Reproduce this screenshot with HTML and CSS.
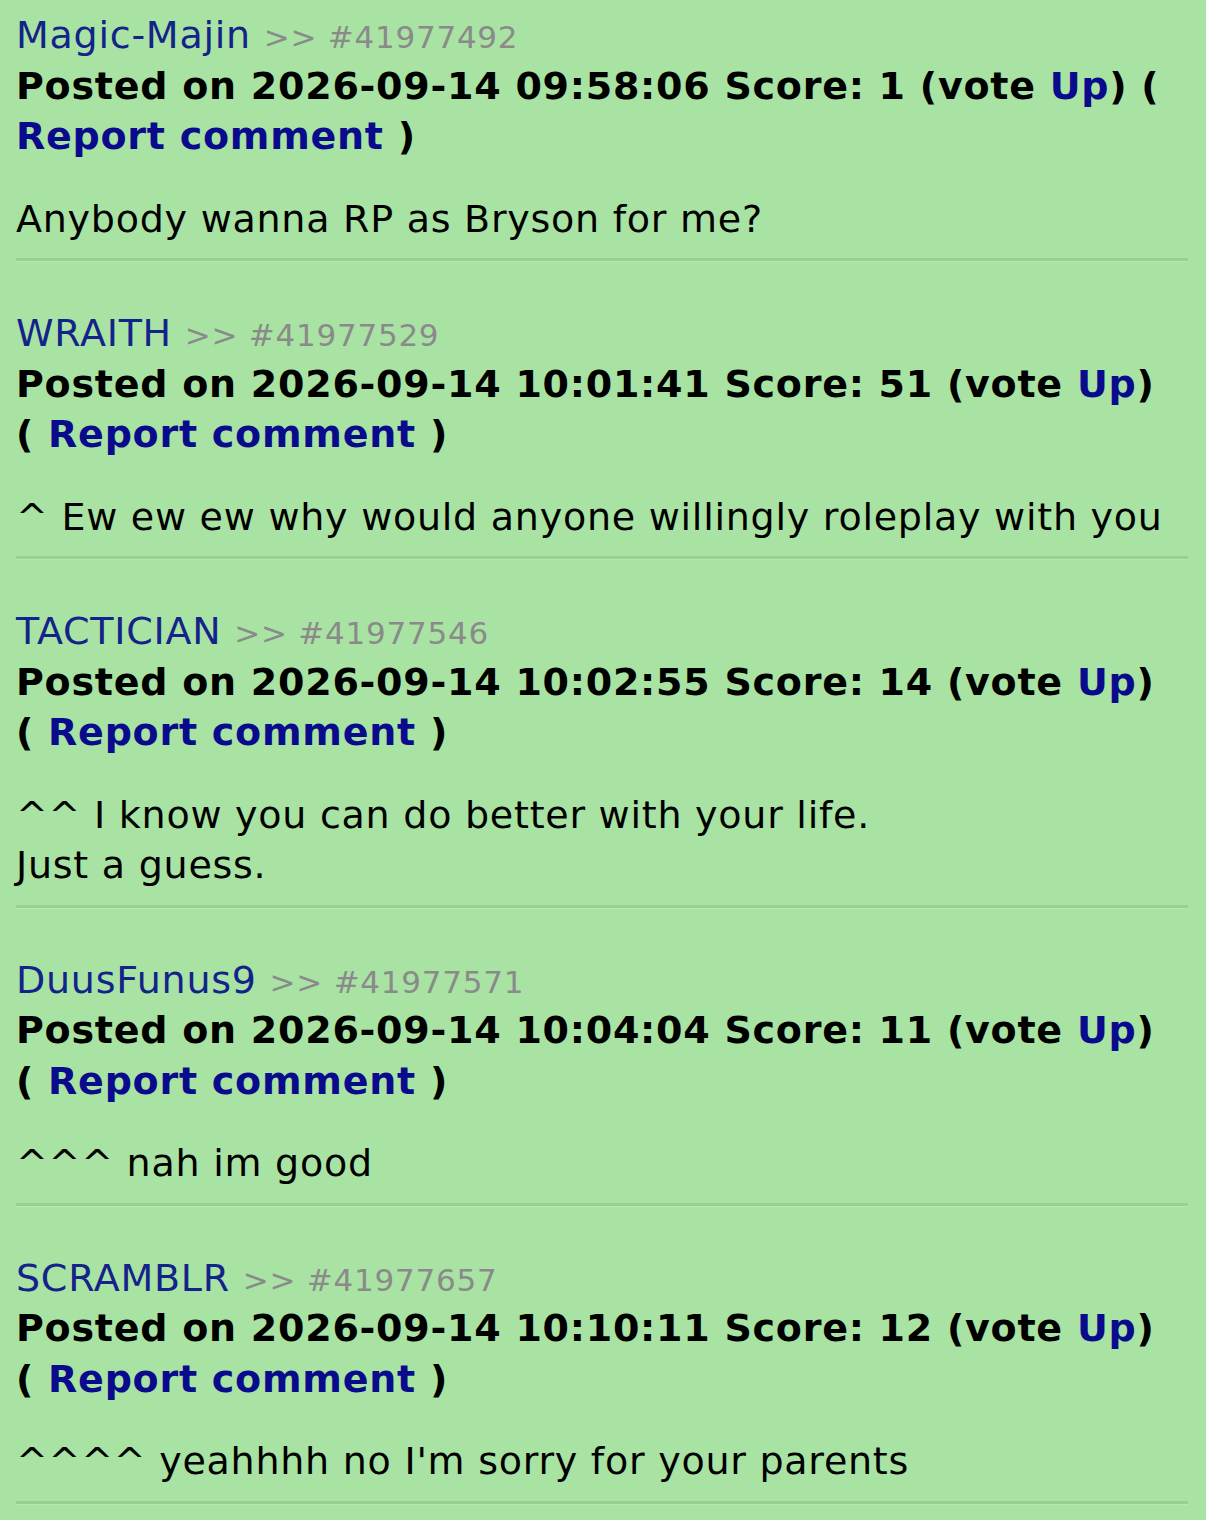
FILE: index.html
```html
<!DOCTYPE html>
<html lang="en">
<head>
    <meta charset="UTF-8">
    <meta name="viewport" content="width=device-width, initial-scale=1.0">
    <title>Comments</title>
    <link rel="stylesheet" href="styles.css">
</head>
<body>
    <div class="comments">
        <div class="comment">
            <div class="meta">
                <a class="user" href="#">Magic-Majin</a> <span class="cid">&gt;&gt; #41977492</span><br>
                <b>Posted on 2026-09-14 09:58:06 Score: 1 <span>(vote <a href="#">Up</a>)</span> <span>(</span> <a href="#">Report comment</a> <span>)</span></b>
            </div>
            <p class="text">Anybody wanna RP as Bryson for me?</p>
        </div>
        <hr>

        <div class="comment">
            <div class="meta">
                <a class="user" href="#">WRAITH</a> <span class="cid">&gt;&gt; #41977529</span><br>
                <b>Posted on 2026-09-14 10:01:41 Score: 51 <span>(vote <a href="#">Up</a>)</span> <span>(</span> <a href="#">Report comment</a> <span>)</span></b>
            </div>
            <p class="text">^ Ew ew ew why would anyone willingly roleplay with you</p>
        </div>
        <hr>

        <div class="comment">
            <div class="meta">
                <a class="user" href="#">TACTICIAN</a> <span class="cid">&gt;&gt; #41977546</span><br>
                <b>Posted on 2026-09-14 10:02:55 Score: 14 <span>(vote <a href="#">Up</a>)</span> <span>(</span> <a href="#">Report comment</a> <span>)</span></b>
            </div>
            <p class="text">^^ I know you can do better with your life.<br>Just a guess.</p>
        </div>
        <hr>

        <div class="comment">
            <div class="meta">
                <a class="user" href="#">DuusFunus9</a> <span class="cid">&gt;&gt; #41977571</span><br>
                <b>Posted on 2026-09-14 10:04:04 Score: 11 <span>(vote <a href="#">Up</a>)</span> <span>(</span> <a href="#">Report comment</a> <span>)</span></b>
            </div>
            <p class="text">^^^ nah im good</p>
        </div>
        <hr>

        <div class="comment">
            <div class="meta">
                <a class="user" href="#">SCRAMBLR</a> <span class="cid">&gt;&gt; #41977657</span><br>
                <b>Posted on 2026-09-14 10:10:11 Score: 12 <span>(vote <a href="#">Up</a>)</span> <span>(</span> <a href="#">Report comment</a> <span>)</span></b>
            </div>
            <p class="text">^^^^ yeahhhh no I'm sorry for your parents</p>
        </div>
        <hr>
    </div>
</body>
</html>
```

FILE: styles.css
```css
body {
    margin: 0;
    background-color: #a8e3a3;
    font-family: Verdana, "DejaVu Sans", sans-serif;
    font-size: 38px;
    letter-spacing: 0.75px;
    line-height: 50.5px;
    color: #000;
}

.comments {
    width: 1172px;
    padding: 10px 0 0 16px;
}

.meta {
    padding-right: 12px;
}

a {
    color: #0a0a8c;
    text-decoration: none;
}

.user {
    color: #14238a;
}

.cid {
    color: #8a8a8a;
    font-size: 31px;
    line-height: 1;
}

.text {
    margin: 32px 0 14px;
}

hr {
    margin: 0 0 46px;
    border: none;
    border-top: 3px solid #97d092;
    border-bottom: 1px solid #b3eaae;
}
```
